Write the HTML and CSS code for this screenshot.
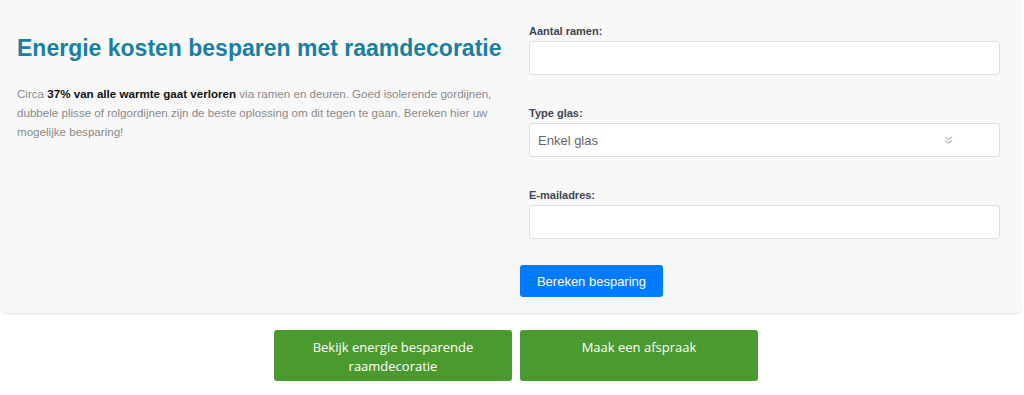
FILE: index.html
```html
<!DOCTYPE html>
<html lang="nl">
<head>
    <meta charset="UTF-8">
    <meta name="viewport" content="width=device-width, initial-scale=1.0">
    <title>Energie kosten besparen</title>
    <link rel="stylesheet" href="styles.css">
</head>
<body>
    <div class="panel">
        <div class="intro">
            <h1>Energie kosten besparen met raamdecoratie</h1>
            <p>Circa <strong>37% van alle warmte gaat verloren</strong> via ramen en deuren. Goed isolerende gordijnen, dubbele plisse of rolgordijnen zijn de beste oplossing om dit tegen te gaan. Bereken hier uw mogelijke besparing!</p>
        </div>

        <form class="calc">
            <div class="field">
                <label for="ramen">Aantal ramen:</label>
                <input type="text" id="ramen">
            </div>
            <div class="field">
                <label for="glas">Type glas:</label>
                <div class="select">
                    <span>Enkel glas</span>
                    <svg width="9" height="8" viewBox="0 0 9 8"><path d="M1 1l3.5 2.5L8 1M1 4.5L4.5 7 8 4.5" fill="none" stroke="#bbb" stroke-width="1.4"/></svg>
                </div>
            </div>
            <div class="field">
                <label for="email">E-mailadres:</label>
                <input type="text" id="email">
            </div>
            <button type="button" class="btn-blue">Bereken besparing</button>
        </form>
    </div>

    <div class="actions">
        <a class="btn-green" href="#">Bekijk energie besparende raamdecoratie</a>
        <a class="btn-green" href="#">Maak een afspraak</a>
    </div>
</body>
</html>
```

FILE: styles.css
```css
* {
    margin: 0;
    padding: 0;
    box-sizing: border-box;
}

body {
    font-family: "Liberation Sans", Arial, sans-serif;
    background: #fff;
}

.panel {
    width: 1022px;
    background: #f8f8f8;
    border-radius: 0 0 6px 6px;
    box-shadow: 0 1px 2px rgba(0, 0, 0, 0.12);
    display: grid;
    grid-template-columns: 520px 1fr;
    padding-bottom: 16px;
}

.intro {
    padding: 33px 17px 0 17px;
}

.intro h1 {
    font-size: 23px;
    font-weight: bold;
    color: #1a7fa2;
    line-height: 30px;
    white-space: nowrap;
}

.intro p {
    margin-top: 21px;
    font-size: 11.6px;
    line-height: 19px;
    color: #8a8a8a;
    max-width: 478px;
}

.intro p strong {
    color: #111;
}

.calc {
    padding-top: 24px;
}

.field {
    padding: 0 22px 0 9px;
    margin-bottom: 31px;
}

.field label {
    display: block;
    font-size: 11px;
    font-weight: bold;
    color: #3d4652;
    line-height: 15px;
    margin-bottom: 2px;
}

.field input,
.select {
    display: flex;
    align-items: center;
    justify-content: space-between;
    width: 100%;
    height: 34px;
    background: #fff;
    border: 1px solid #dedede;
    border-radius: 3px;
}

.select {
    padding: 0 46px 0 8px;
    font-size: 13px;
    color: #666;
}

.field:nth-child(3) {
    margin-bottom: 26px;
}

.btn-blue {
    width: 143px;
    height: 32px;
    background: #007bff;
    color: #fff;
    border: none;
    border-radius: 3px;
    font-family: "Liberation Sans", Arial, sans-serif;
    font-size: 13px;
}

.actions {
    display: flex;
    justify-content: center;
    gap: 8px;
    margin-top: 17px;
    padding-left: 8px;
}

.btn-green {
    width: 238px;
    height: 51px;
    background: #4a9a2f;
    border-radius: 3px;
    color: #fff;
    text-decoration: none;
    text-align: center;
    font-family: "Open Sans", sans-serif;
    font-size: 13px;
    line-height: 19px;
    padding: 8px 20px 0;
}
```
